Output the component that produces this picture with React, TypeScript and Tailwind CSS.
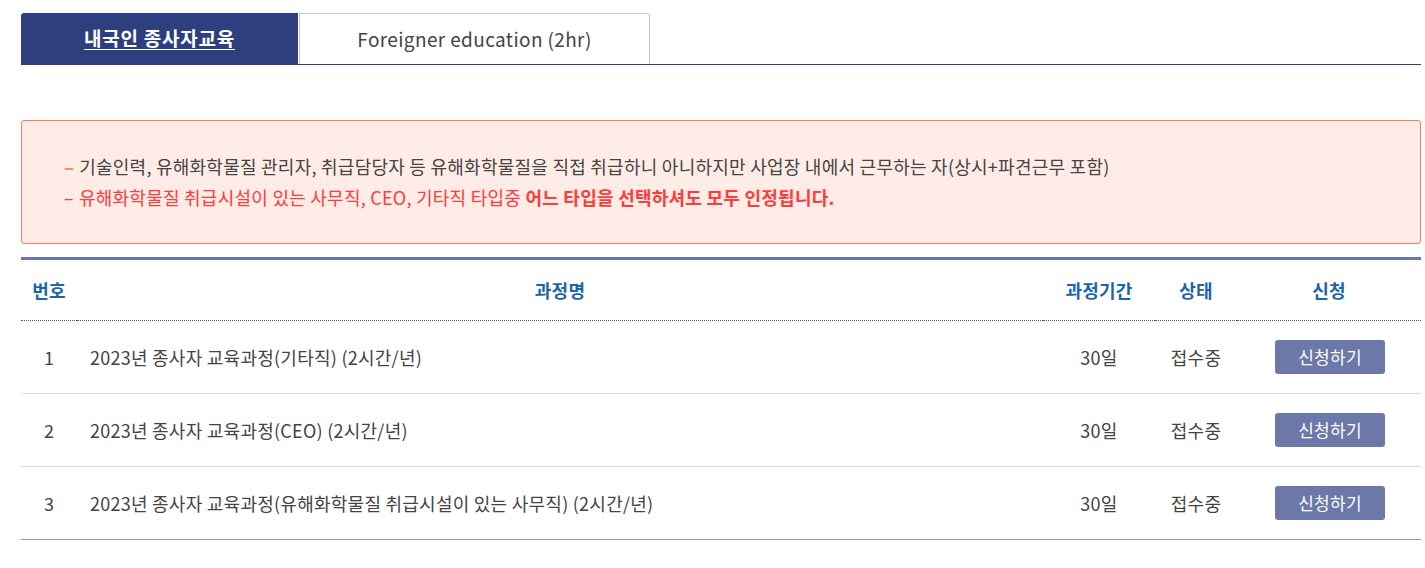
const courses = [
  { no: 1, title: '2023년 종사자 교육과정(기타직) (2시간/년)' },
  { no: 2, title: '2023년 종사자 교육과정(CEO) (2시간/년)' },
  { no: 3, title: '2023년 종사자 교육과정(유해화학물질 취급시설이 있는 사무직) (2시간/년)' },
];

export default function App() {
  return (
    <div className="min-h-[568px] bg-white pl-[21px] pr-[4px] pt-[13px] font-['Noto_Sans_CJK_KR',sans-serif] tracking-[0.25px]">
      {/* Tabs */}
      <div className="flex h-[52px] border-b border-[#2e3f7f]">
        <button className="flex w-[277px] items-center justify-center rounded-tl-[3px] bg-[#2e3f7f] text-[19px] font-bold tracking-[0.04em] text-white underline underline-offset-[3px]">
          내국인 종사자교육
        </button>
        <button className="ml-px flex w-[351px] items-center justify-center rounded-tr-[3px] border border-b-0 border-[#c8c8c8] bg-white text-[19px] tracking-[0.02em] text-[#444]">
          Foreigner education (2hr)
        </button>
      </div>

      {/* Notice */}
      <div className="mt-[55px] flex h-[124px] flex-col justify-center gap-[6px] rounded-[3px] border border-[#ff7b55] bg-[#ffece6] pl-[42px] text-[18px] leading-[25px]">
        <p className="text-[#444]">
          <span className="mr-[5px] font-black text-[#ff8a68]">–</span>
          기술인력, 유해화학물질 관리자, 취급담당자 등 유해화학물질을 직접 취급하니 아니하지만 사업장 내에서 근무하는 자(상시+파견근무 포함)
        </p>
        <p className="text-[#ff3b3b]">
          <span className="mr-[5px]">–</span>
          유해화학물질 취급시설이 있는 사무직, CEO, 기타직 타입중 <strong className="font-bold">어느 타입을 선택하셔도 모두 인정됩니다.</strong>
        </p>
      </div>

      {/* Table */}
      <table className="mt-[13px] w-full border-collapse border-t-[3px] border-[#6b78a8] text-[18px]">
        <thead>
          <tr className="h-[62px] border-b border-dotted border-[#44549a] text-[#1b66a6]">
            <th className="w-[56px] font-bold">번호</th>
            <th className="font-bold">과정명</th>
            <th className="w-[112px] font-bold">과정기간</th>
            <th className="w-[82px] font-bold">상태</th>
            <th className="w-[184px] font-bold">신청</th>
          </tr>
        </thead>
        <tbody className="text-[#444]">
          {courses.map((c, i) => (
            <tr
              key={c.no}
              className={
                i === courses.length - 1
                  ? 'h-[73px] border-b border-[#999]'
                  : 'h-[73px] border-b border-[#dcdcdc]'
              }
            >
              <td className="text-center">{c.no}</td>
              <td className="pl-[13px]">{c.title}</td>
              <td className="text-center">30일</td>
              <td className="text-center">접수중</td>
              <td className="text-center">
                <button className="ml-[2px] h-[34px] w-[110px] rounded-[3px] bg-[#6b78a8] text-[17px] text-white">
                  신청하기
                </button>
              </td>
            </tr>
          ))}
        </tbody>
      </table>
    </div>
  );
}
